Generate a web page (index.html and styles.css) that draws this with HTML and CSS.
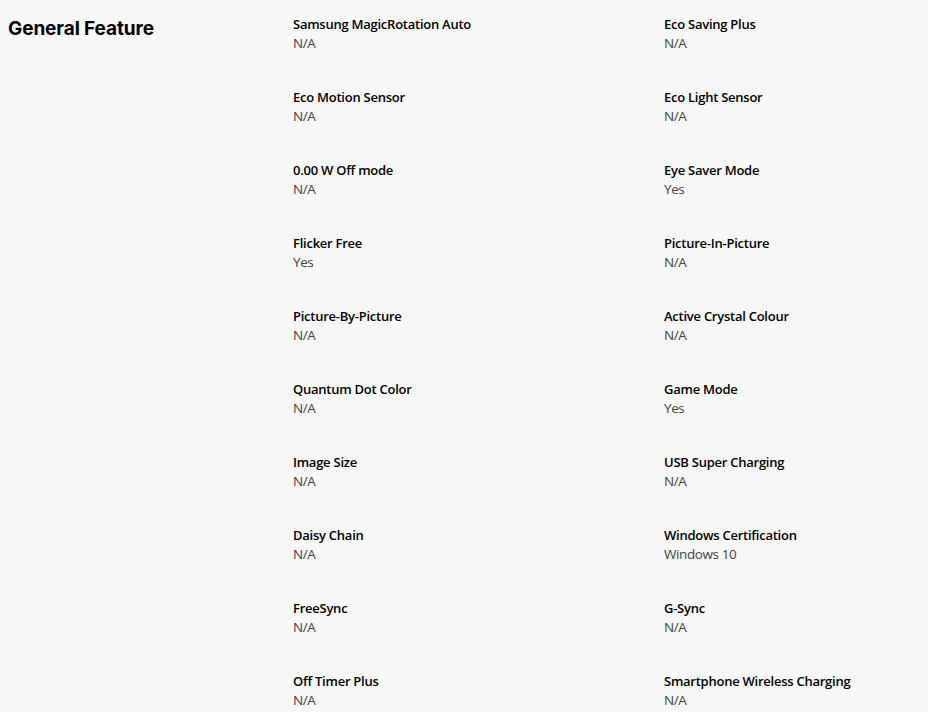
FILE: index.html
```html
<!DOCTYPE html>
<html>
<head>
<meta charset="utf-8">
<link rel="stylesheet" href="styles.css">
</head>
<body>
<div class="spec">
  <h2 class="spec-title">General Feature</h2>
  <div class="spec-grid">
    <div class="item"><div class="label">Samsung MagicRotation Auto</div><div class="value">N/A</div></div>
    <div class="item"><div class="label">Eco Saving Plus</div><div class="value">N/A</div></div>
    <div class="item"><div class="label">Eco Motion Sensor</div><div class="value">N/A</div></div>
    <div class="item"><div class="label">Eco Light Sensor</div><div class="value">N/A</div></div>
    <div class="item"><div class="label">0.00 W Off mode</div><div class="value">N/A</div></div>
    <div class="item"><div class="label">Eye Saver Mode</div><div class="value">Yes</div></div>
    <div class="item"><div class="label">Flicker Free</div><div class="value">Yes</div></div>
    <div class="item"><div class="label">Picture-In-Picture</div><div class="value">N/A</div></div>
    <div class="item"><div class="label">Picture-By-Picture</div><div class="value">N/A</div></div>
    <div class="item"><div class="label">Active Crystal Colour</div><div class="value">N/A</div></div>
    <div class="item"><div class="label">Quantum Dot Color</div><div class="value">N/A</div></div>
    <div class="item"><div class="label">Game Mode</div><div class="value">Yes</div></div>
    <div class="item"><div class="label">Image Size</div><div class="value">N/A</div></div>
    <div class="item"><div class="label">USB Super Charging</div><div class="value">N/A</div></div>
    <div class="item"><div class="label">Daisy Chain</div><div class="value">N/A</div></div>
    <div class="item"><div class="label">Windows Certification</div><div class="value">Windows 10</div></div>
    <div class="item"><div class="label">FreeSync</div><div class="value">N/A</div></div>
    <div class="item"><div class="label">G-Sync</div><div class="value">N/A</div></div>
    <div class="item"><div class="label">Off Timer Plus</div><div class="value">N/A</div></div>
    <div class="item"><div class="label">Smartphone Wireless Charging</div><div class="value">N/A</div></div>
  </div>
</div>
</body>
</html>
```
FILE: styles.css
```css
html, body {
  margin: 0;
  padding: 0;
  background: #f7f7f7;
}
body {
  font-family: "Open Sans", "Noto Sans", sans-serif;
  color: #000;
}
.spec {
  display: flex;
  padding: 14px 0 0 8px;
}
.spec-title {
  width: 285px;
  margin: 2px 0 0;
  font-family: "Inter", sans-serif;
  font-size: 19px;
  font-weight: 700;
  line-height: 26px;
  letter-spacing: -0.1px;
}
.spec-grid {
  display: grid;
  grid-template-columns: 371px 1fr;
  row-gap: 34px;
}
.item {
  display: flex;
  flex-direction: column;
}
.label {
  font-size: 13px;
  font-weight: 600;
  line-height: 20px;
  letter-spacing: -0.25px;
}
.value {
  font-size: 13.5px;
  line-height: 19px;
  letter-spacing: -0.4px;
  color: #444;
}
```
